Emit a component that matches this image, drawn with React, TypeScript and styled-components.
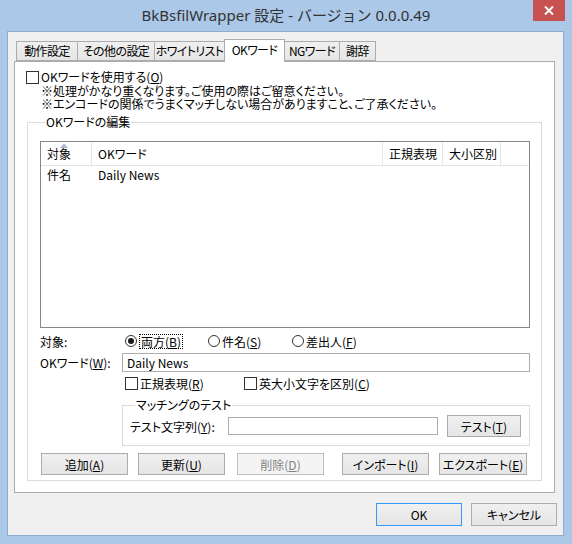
import { FC, ReactNode } from "react"
import styled, { createGlobalStyle } from "styled-components"

const uiFont = `"Noto Sans CJK JP", "Noto Sans", sans-serif`

const GlobalStyle = createGlobalStyle`
  html, body {
    margin: 0;
    padding: 0;
    background: #ffffff;
  }
  body {
    font-family: ${uiFont};
    font-size: 12px;
    color: #000;
    font-feature-settings: "palt";
  }
  * {
    box-sizing: border-box;
  }
`

const Window = styled.div`
  width: 572px;
  height: 544px;
  display: flex;
  flex-direction: column;
  background: #abc8e8;
`

const TitleBar = styled.div`
  height: 31px;
  flex: none;
  display: grid;
  grid-template-columns: 1fr auto 1fr;
  align-items: start;
`

const Title = styled.div`
  grid-column: 2;
  font-family: "Noto Sans", "Noto Sans CJK JP", sans-serif;
  font-size: 15px;
  line-height: 31px;
  color: #333;
  white-space: nowrap;
  font-feature-settings: normal;
`

const CloseButton = styled.div`
  grid-column: 3;
  justify-self: end;
  width: 32px;
  height: 21px;
  margin-right: 7px;
  background: #c75050;
  display: flex;
  align-items: center;
  justify-content: center;
`

const Client = styled.div`
  flex: 1;
  margin: 0 8px 8px 7px;
  background: #f0f0f0;
  border: 1px solid #8eaccb;
  padding: 0 6px;
  display: flex;
  flex-direction: column;
`

const TabRow = styled.div`
  height: 30px;
  display: flex;
  align-items: flex-end;
  padding-left: 2px;
  margin-bottom: -1px;
  margin-right: 2px;
  position: relative;
  z-index: 1;
`

const Tab = styled.div<{ $width: number; $active?: boolean }>`
  width: ${({ $width }) => $width}px;
  height: ${({ $active }) => ($active ? 23 : 20)}px;
  margin-right: -1px;
  margin-bottom: ${({ $active }) => ($active ? 0 : 1)}px;
  border: 1px solid #acacac;
  border-bottom: ${({ $active }) => ($active ? "none" : "1px solid #acacac")};
  background: ${({ $active }) =>
    $active ? "#ffffff" : "linear-gradient(#f0f0f0, #e5e5e5)"};
  display: flex;
  align-items: ${({ $active }) => ($active ? "flex-start" : "center")};
  padding-top: ${({ $active }) => ($active ? 2 : 0)}px;
  justify-content: center;
  font-size: 12px;
  line-height: 16px;
  letter-spacing: -0.6px;
  white-space: nowrap;
  position: relative;
  z-index: ${({ $active }) => ($active ? 2 : 1)};
`

const Panel = styled.div`
  height: 432px;
  flex: none;
  margin-right: 2px;
  background: #ffffff;
  border: 1px solid #acacac;
  padding: 8px 12px 10px 11px;
  display: flex;
  flex-direction: column;
`

const CheckRow = styled.label`
  display: flex;
  align-items: center;
  gap: 2px;
  height: 14px;
  line-height: 14px;
  white-space: nowrap;
`

const CheckBox = styled.span`
  width: 13px;
  height: 13px;
  flex: none;
  border: 1px solid #333;
  background: #fff;
`

const Notes = styled.div`
  margin: 1px 0 0 15px;
  line-height: 12.5px;
  white-space: nowrap;
`

const Group = styled.fieldset`
  margin: 5px 0 0 1px;
  padding: 0 11px 5px 12px;
  border: 1px solid #dcdcdc;
  min-width: 0;
`

const GroupLegend = styled.legend`
  margin-left: 5px;
  padding: 0 1px;
  line-height: 14px;
  font-size: 12px;
`

const ListView = styled.div`
  height: 187px;
  margin-top: 12px;
  border: 1px solid #828790;
  background: #fff;
`

const ListGrid = styled.div<{ $header?: boolean }>`
  display: grid;
  grid-template-columns: 51px 291px 60px 58px 1fr;
  height: ${({ $header }) => ($header ? 24 : 17)}px;
  border-bottom: ${({ $header }) => ($header ? "1px solid #e5e5e5" : "none")};
`

const HeaderCell = styled.div<{ $last?: boolean }>`
  position: relative;
  padding-left: 6px;
  line-height: 23px;
  white-space: nowrap;
  border-right: ${({ $last }) => ($last ? "none" : "1px solid #e5e5e5")};
`

const SortArrow = styled.svg`
  position: absolute;
  left: 19px;
  top: 1px;
`

const Cell = styled.div`
  padding-left: 6px;
  line-height: 18px;
  white-space: nowrap;
`

const FormRow = styled.div<{ $height: number; $top: number; $indent?: number }>`
  display: flex;
  align-items: center;
  height: ${({ $height }) => $height}px;
  margin-top: ${({ $top }) => $top}px;
  margin-left: ${({ $indent }) => $indent ?? 0}px;
  white-space: nowrap;
`

const RowLabel = styled.div<{ $width: number }>`
  width: ${({ $width }) => $width}px;
  flex: none;
`

const Option = styled.label<{ $width?: number }>`
  display: flex;
  align-items: center;
  gap: 2px;
  width: ${({ $width }) => ($width ? `${$width}px` : "auto")};
  flex: none;
`

const Radio = styled.span<{ $checked?: boolean }>`
  width: 12px;
  height: 12px;
  flex: none;
  border: 1px solid #333;
  border-radius: 50%;
  background: #fff;
  display: flex;
  align-items: center;
  justify-content: center;
  &::after {
    content: "";
    width: 6px;
    height: 6px;
    border-radius: 50%;
    background: ${({ $checked }) => ($checked ? "#1a1a1a" : "transparent")};
  }
`

const FocusText = styled.span`
  border: 1px dotted #000;
  padding: 0 1px;
  line-height: 13px;
`

const TextInput = styled.div<{ $width?: number; $height: number }>`
  height: ${({ $height }) => $height}px;
  width: ${({ $width }) => ($width ? `${$width}px` : "auto")};
  flex: ${({ $width }) => ($width ? "none" : "1")};
  border: 1px solid #abadb3;
  background: #fff;
  padding-left: 4px;
  line-height: ${({ $height }) => $height - 2}px;
`

const TestGroup = styled(Group)`
  margin: 8px 0 0 82px;
  padding: 3px 8px 8px 7px;
`

const Button = styled.div<{
  $width: number
  $height?: number
  $left?: number
  $disabled?: boolean
  $default?: boolean
}>`
  width: ${({ $width }) => $width}px;
  height: ${({ $height }) => $height ?? 22}px;
  margin-left: ${({ $left }) => $left ?? 0}px;
  flex: none;
  border: 1px solid
    ${({ $disabled, $default }) =>
      $default ? "#3399ff" : $disabled ? "#bfbfbf" : "#acacac"};
  background: ${({ $disabled }) =>
    $disabled ? "#f4f4f4" : "linear-gradient(#f0f0f0, #e5e5e5)"};
  color: ${({ $disabled }) => ($disabled ? "#838383" : "#000")};
  display: flex;
  align-items: center;
  justify-content: center;
  white-space: nowrap;
  font-size: 12px;
`

const DialogButtons = styled.div`
  display: flex;
  justify-content: flex-end;
  gap: 9px;
  margin-top: 10px;
`

const Mn: FC<{ children: ReactNode }> = ({ children }) => <u>{children}</u>

const tabs = [
  { label: "動作設定", width: 62 },
  { label: "その他の設定", width: 78 },
  { label: "ホワイトリスト", width: 71 },
  { label: "OKワード", width: 61, active: true },
  { label: "NGワード", width: 56 },
  { label: "謝辞", width: 37 },
]

export default function App() {
  return (
    <>
      <GlobalStyle />
      <Window>
        <TitleBar>
          <Title>BkBsfilWrapper 設定 - バージョン 0.0.0.49</Title>
          <CloseButton>
            <svg width="10" height="9" viewBox="0 0 10 9">
              <path d="M1 0.5 L9 8.5 M9 0.5 L1 8.5" stroke="#fff" strokeWidth="2" />
            </svg>
          </CloseButton>
        </TitleBar>
        <Client>
          <TabRow>
            {tabs.map((t) => (
              <Tab key={t.label} $width={t.width} $active={t.active}>
                {t.label}
              </Tab>
            ))}
          </TabRow>
          <Panel>
            <CheckRow>
              <CheckBox />
              <span>
                OKワードを使用する(<Mn>O</Mn>)
              </span>
            </CheckRow>
            <Notes>
              ※処理がかなり重くなります。ご使用の際はご留意ください。
              <br />
              ※エンコードの関係でうまくマッチしない場合がありますこと、ご了承ください。
            </Notes>
            <Group>
              <GroupLegend>OKワードの編集</GroupLegend>
              <ListView>
                <ListGrid $header>
                  <HeaderCell>
                    <SortArrow width="8" height="5" viewBox="0 0 8 5">
                      <path d="M0 5 L4 0.5 L8 5 Z" fill="#a5b9d6" />
                    </SortArrow>
                    対象
                  </HeaderCell>
                  <HeaderCell>OKワード</HeaderCell>
                  <HeaderCell>正規表現</HeaderCell>
                  <HeaderCell>大小区別</HeaderCell>
                  <HeaderCell $last />
                </ListGrid>
                <ListGrid>
                  <Cell>件名</Cell>
                  <Cell>Daily News</Cell>
                  <Cell />
                  <Cell />
                  <Cell />
                </ListGrid>
              </ListView>

              <FormRow $height={14} $top={6}>
                <RowLabel $width={85}>対象:</RowLabel>
                <Option $width={83}>
                  <Radio $checked />
                  <FocusText>
                    両方(<Mn>B</Mn>)
                  </FocusText>
                </Option>
                <Option $width={84}>
                  <Radio />
                  <span>
                    件名(<Mn>S</Mn>)
                  </span>
                </Option>
                <Option>
                  <Radio />
                  <span>
                    差出人(<Mn>F</Mn>)
                  </span>
                </Option>
              </FormRow>

              <FormRow $height={19} $top={5}>
                <RowLabel $width={82}>
                  OKワード(<Mn>W</Mn>):
                </RowLabel>
                <TextInput $height={19}>Daily News</TextInput>
              </FormRow>

              <FormRow $height={14} $top={4} $indent={85}>
                <Option $width={119}>
                  <CheckBox />
                  <span>
                    正規表現(<Mn>R</Mn>)
                  </span>
                </Option>
                <Option>
                  <CheckBox />
                  <span>
                    英大小文字を区別(<Mn>C</Mn>)
                  </span>
                </Option>
              </FormRow>

              <TestGroup>
                <GroupLegend>マッチングのテスト</GroupLegend>
                <FormRow $height={22} $top={0}>
                  <RowLabel $width={98}>
                    テスト文字列(<Mn>Y</Mn>):
                  </RowLabel>
                  <TextInput $width={210} $height={18} />
                  <Button $width={74} $left={9}>
                    テスト(<Mn>T</Mn>)
                  </Button>
                </FormRow>
              </TestGroup>

              <FormRow $height={22} $top={7}>
                <Button $width={87} $left={1}>
                  追加(<Mn>A</Mn>)
                </Button>
                <Button $width={87} $left={10}>
                  更新(<Mn>U</Mn>)
                </Button>
                <Button $width={87} $left={12} $disabled>
                  削除(<Mn>D</Mn>)
                </Button>
                <Button $width={87} $left={18}>
                  インポート(<Mn>I</Mn>)
                </Button>
                <Button $width={88} $left={10}>
                  エクスポート(<Mn>E</Mn>)
                </Button>
              </FormRow>
            </Group>
          </Panel>
          <DialogButtons>
            <Button $width={86} $height={23} $default>
              OK
            </Button>
            <Button $width={86} $height={23}>
              キャンセル
            </Button>
          </DialogButtons>
        </Client>
      </Window>
    </>
  )
}
